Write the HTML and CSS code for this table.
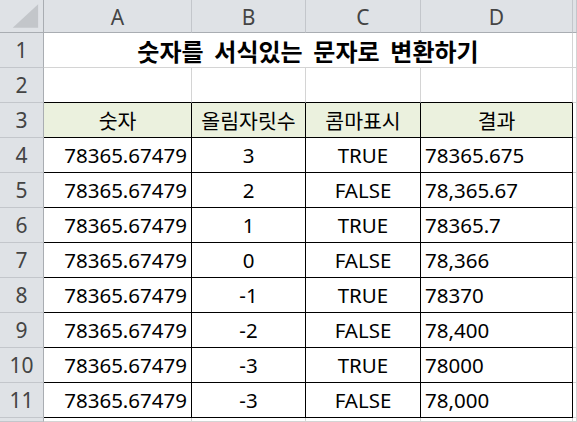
FILE: index.html
```html
<!DOCTYPE html>
<html lang="ko">
<head>
<meta charset="utf-8">
<link rel="stylesheet" href="styles.css">
</head>
<body>
<div class="sheet">
  <div class="corner"><svg width="44" height="33" viewBox="0 0 44 33"><polygon points="39,4 39,28 13,28" fill="#c3c6ca"/></svg></div>
  <div class="ch">A</div><div class="ch">B</div><div class="ch">C</div><div class="ch">D</div><div class="ch last"></div>

  <div class="rh">1</div>
  <div class="title">숫자를 서식있는 문자로 변환하기</div>
  <div class="c"></div>

  <div class="rh">2</div>
  <div class="c tb"></div><div class="c tb"></div><div class="c tb"></div><div class="c tb"></div><div class="c"></div>

  <div class="rh">3</div>
  <div class="c t hd">숫자</div><div class="c t hd">올림자릿수</div><div class="c t hd">콤마표시</div><div class="c t hd">결과</div><div class="c"></div>

  <div class="rh">4</div>
  <div class="c t r">78365.67479</div><div class="c t m">3</div><div class="c t m">TRUE</div><div class="c t l">78365.675</div><div class="c"></div>
  <div class="rh">5</div>
  <div class="c t r">78365.67479</div><div class="c t m">2</div><div class="c t m">FALSE</div><div class="c t l">78,365.67</div><div class="c"></div>
  <div class="rh">6</div>
  <div class="c t r">78365.67479</div><div class="c t m">1</div><div class="c t m">TRUE</div><div class="c t l">78365.7</div><div class="c"></div>
  <div class="rh">7</div>
  <div class="c t r">78365.67479</div><div class="c t m">0</div><div class="c t m">FALSE</div><div class="c t l">78,366</div><div class="c"></div>
  <div class="rh">8</div>
  <div class="c t r">78365.67479</div><div class="c t m">-1</div><div class="c t m">TRUE</div><div class="c t l">78370</div><div class="c"></div>
  <div class="rh">9</div>
  <div class="c t r">78365.67479</div><div class="c t m">-2</div><div class="c t m">FALSE</div><div class="c t l">78,400</div><div class="c"></div>
  <div class="rh">10</div>
  <div class="c t r">78365.67479</div><div class="c t m">-3</div><div class="c t m">TRUE</div><div class="c t l">78000</div><div class="c"></div>
  <div class="rh">11</div>
  <div class="c t r">78365.67479</div><div class="c t m">-3</div><div class="c t m">FALSE</div><div class="c t l">78,000</div><div class="c"></div>

  <div class="rh"></div>
  <div class="c"></div><div class="c"></div><div class="c"></div><div class="c"></div><div class="c"></div>
</div>
</body>
</html>
```
FILE: styles.css
```css
html, body {
  margin: 0;
  padding: 0;
  background: #ffffff;
  overflow: hidden;
}
.sheet {
  width: 577px;
  height: 422px;
  display: grid;
  grid-template-columns: 44px 148px 114px 115px 152px 1fr;
  grid-template-rows: 33px repeat(11, 35px) 1fr;
  font-family: "Noto Sans", "Noto Sans CJK KR", sans-serif;
  font-size: 20.5px;
  color: #000;
}
.sheet > div {
  box-sizing: border-box;
  display: flex;
  align-items: center;
  white-space: nowrap;
  overflow: hidden;
}
.corner {
  background: #dfe2e6;
  border-right: 1px solid #a9adb2;
  border-bottom: 1px solid #a9adb2;
}
.corner svg { display: block; }
.ch {
  background: #dfe2e6;
  border-right: 1px solid #c3c6cb;
  border-bottom: 1px solid #a9adb2;
  justify-content: center;
  color: #444;
  font-size: 21px;
  padding-top: 1px;
}
.rh {
  background: #dfe2e6;
  border-right: 1px solid #a9adb2;
  border-bottom: 1px solid #c3c6cb;
  justify-content: center;
  color: #444;
  font-size: 21px;
}
.c {
  border-right: 1px solid #d4d4d4;
  border-bottom: 1px solid #d4d4d4;
}
.title {
  grid-column: 2 / 6;
  justify-content: center;
  font-family: "Noto Sans CJK KR", sans-serif;
  font-weight: bold;
  font-size: 24px;
  word-spacing: 4px;
  border-right: 1px solid #d4d4d4;
  border-bottom: 1px solid #d4d4d4;
}
.c.tb {
  border-bottom-color: #000;
}
.c.t {
  border-right-color: #000;
  border-bottom-color: #000;
}
.hd {
  background: #ebf1de;
  justify-content: center;
  font-family: "Noto Sans CJK KR", sans-serif;
}
.r { justify-content: flex-end; padding-right: 4px; }
.m { justify-content: center; }
.l { justify-content: flex-start; padding-left: 4px; }
```
